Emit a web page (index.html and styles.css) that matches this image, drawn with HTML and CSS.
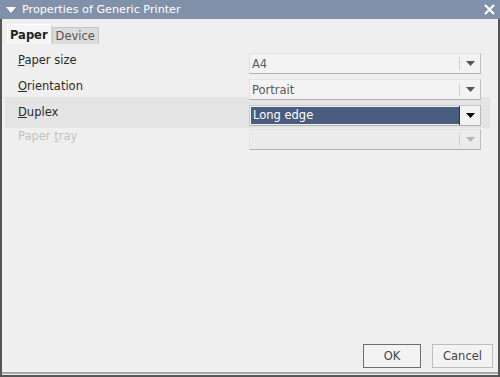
FILE: index.html
```html
<!DOCTYPE html>
<html lang="en">
<head>
    <meta charset="UTF-8">
    <title>Properties of Generic Printer</title>
    <link rel="stylesheet" href="styles.css">
</head>
<body>
    <div class="window">
        <div class="titlebar">
            <svg class="menu-arrow" width="10" height="6" viewBox="0 0 10 6"><path d="M0 0H10L5 6Z" fill="#fff"/></svg>
            <span class="title">Properties of Generic Printer</span>
            <svg class="close" width="11" height="11" viewBox="0 0 11 11"><path d="M1 1L10 10M10 1L1 10" stroke="#fff" stroke-width="2.2"/></svg>
        </div>
        <div class="content">
            <div class="tabs">
                <div class="tab active">Paper</div>
                <div class="tab">Device</div>
            </div>
            <div class="panel">
                <div class="row">
                    <label><u>P</u>aper size</label>
                    <div class="combo">
                        <span class="value">A4</span>
                        <span class="button"><svg width="9" height="5" viewBox="0 0 9 5"><path d="M0 0H9L4.5 5Z"/></svg></span>
                    </div>
                </div>
                <div class="row">
                    <label><u>O</u>rientation</label>
                    <div class="combo">
                        <span class="value">Portrait</span>
                        <span class="button"><svg width="9" height="5" viewBox="0 0 9 5"><path d="M0 0H9L4.5 5Z"/></svg></span>
                    </div>
                </div>
                <div class="row hover">
                    <label><u>D</u>uplex</label>
                    <div class="combo focused">
                        <span class="value">Long edge</span>
                        <span class="button"><svg width="9" height="5" viewBox="0 0 9 5"><path d="M0 0H9L4.5 5Z"/></svg></span>
                    </div>
                </div>
                <div class="row disabled">
                    <label>Paper <u>t</u>ray</label>
                    <div class="combo">
                        <span class="value"></span>
                        <span class="button"><svg width="9" height="5" viewBox="0 0 9 5"><path d="M0 0H9L4.5 5Z"/></svg></span>
                    </div>
                </div>
            </div>
            <div class="buttons">
                <button class="default">OK</button>
                <button>Cancel</button>
            </div>
        </div>
    </div>
</body>
</html>
```

FILE: styles.css
```css
html, body {
    margin: 0;
    padding: 0;
}
body {
    font-family: "DejaVu Sans", sans-serif;
    font-size: 11.5px;
    background-color: #efefef;
}
.window {
    width: 500px;
    height: 377px;
    box-sizing: border-box;
    display: flex;
    flex-direction: column;
    border-left: 2px solid #555;
    border-right: 2px solid #555;
    border-bottom: 2px solid #555;
    background-color: #efefef;
}
.titlebar {
    height: 19px;
    flex: none;
    display: flex;
    align-items: center;
    background-color: #8091a9;
    color: #fff;
    font-size: 11.2px;
    margin: 0 -2px;
    padding: 0 4px 0 6px;
}
.menu-arrow {
    margin-right: 6px;
}
.title {
    flex: 1;
}
.close {
    margin-left: auto;
    margin-right: 1px;
}
.content {
    flex: 1;
    display: flex;
    flex-direction: column;
    border-bottom: 2px solid #a8a8a8;
    margin-bottom: 1px;
}
.tabs {
    display: flex;
    align-items: flex-end;
    padding: 6px 0 0 5px;
    height: 19px;
}
.tab {
    padding: 1px 3px 1px 3px;
    color: #555;
    background-color: #dcdcdc;
    border: 1px solid #c4c4c4;
    border-bottom: none;
}
.tab.active {
    font-weight: bold;
    color: #222;
    background-color: #f5f5f5;
    border-color: #fff #dcdcdc #fff #fff;
    padding: 3px 3px 2px 2px;
}
.panel {
    margin: 6px 8px 0 3px;
    padding-left: 13px;
    padding-right: 9px;
}
.row {
    display: flex;
    align-items: flex-start;
    height: 23px;
    padding-top: 3px;
    margin: 0 -9px 0 -13px;
    padding-left: 13px;
    padding-right: 9px;
}
.row.hover {
    background-color: #e4e4e4;
    margin-top: -5px;
    padding-top: 8px;
    height: 23px;
}
.row.disabled {
    padding-top: 1px;
}
label {
    flex: 1;
    color: #2a2a2a;
    line-height: 14px;
}
.disabled label {
    color: #c2c2c2;
}
.combo {
    width: 232px;
    height: 21px;
    box-sizing: border-box;
    display: flex;
    align-items: center;
    background-color: #f3f3f3;
    border: 1px solid;
    border-color: #e2e2e2 #bdbdbd #b0b0b0 #e2e2e2;
    color: #5a5a5a;
}
.value {
    flex: 1;
    padding-left: 2px;
}
.combo .button {
    width: 20px;
    height: 13px;
    display: flex;
    align-items: center;
    justify-content: center;
    border-left: 1px solid #d0d0d0;
}
.combo .button svg {
    fill: #555;
}
.combo.focused {
    border-color: #c8c8c8 #b8b8b8 #b0b0b0 #c8c8c8;
}
.combo.focused .value {
    background-color: #4a5d7f;
    color: #fff;
    align-self: stretch;
    margin: 1px 0 1px 1px;
    line-height: 17px;
}
.combo.focused .button {
    border-left: 1px solid #2a3650;
    height: 19px;
}
.combo.focused .button svg {
    fill: #000;
}
.disabled .combo {
    background-color: #ebebeb;
}
.disabled .combo .button svg {
    fill: #b4b4b4;
}
.buttons {
    margin-top: auto;
    display: flex;
    justify-content: flex-end;
    gap: 11px;
    padding: 0 5px 4px 0;
}
button {
    font-family: "DejaVu Sans", sans-serif;
    font-size: 11.5px;
    color: #444;
    background-color: #f3f3f3;
    border: 1px solid #bdbdbd;
    height: 24px;
    width: 61px;
    padding: 0;
}
button.default {
    border-color: #6f6f6f;
    width: 58px;
}
```
